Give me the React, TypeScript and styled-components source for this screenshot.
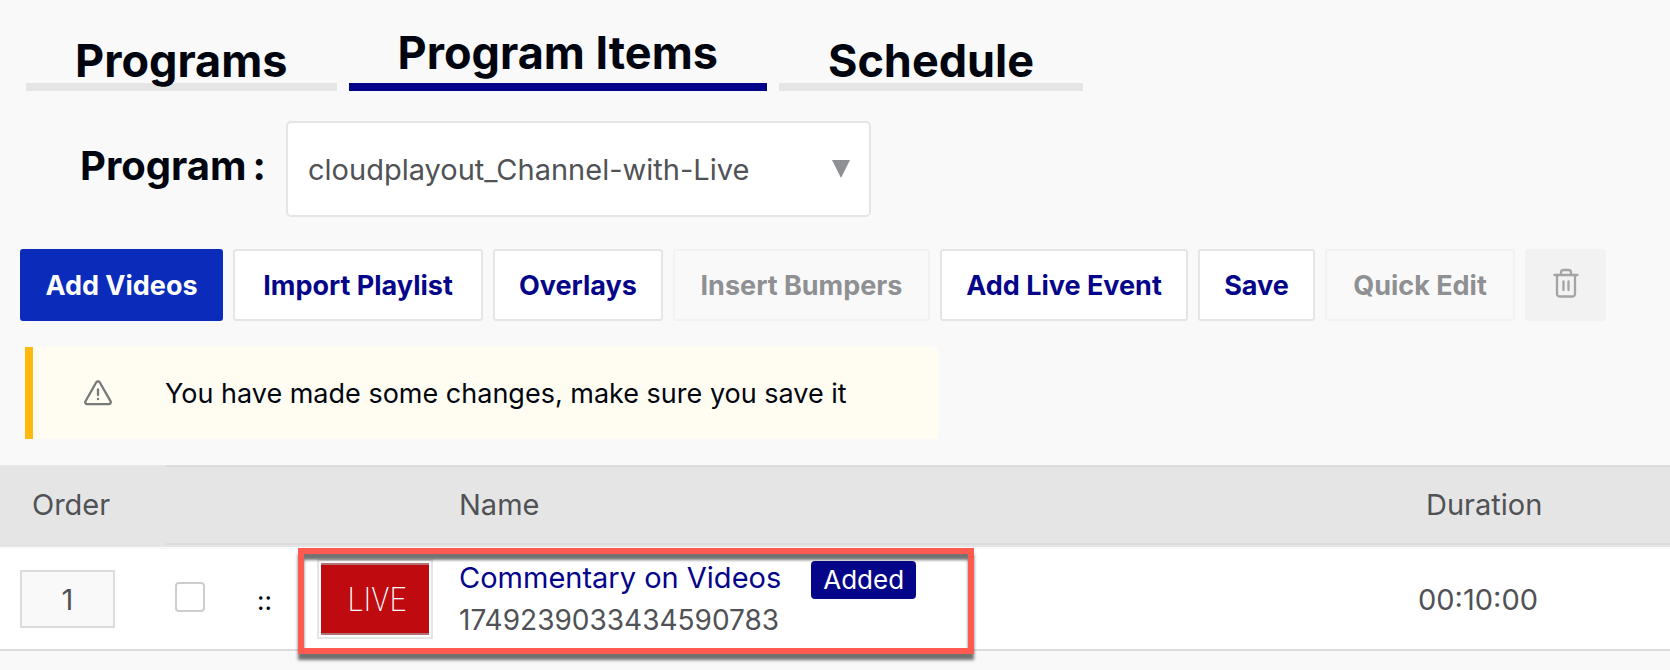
import React, { useState } from "react";
import styled, { createGlobalStyle, css } from "styled-components";

const color = {
  page: "#f9f9f9",
  ink: "#01050f",
  text: "#505256",
  muted: "#8f9093",
  navy: "#05058a",
  blue: "#0b2bbb",
  line: "#e5e5e5",
  rule: "#dcdcdc",
};

const GlobalStyle = createGlobalStyle`
  *, *::before, *::after { box-sizing: border-box; }
  body {
    margin: 0;
    background: ${color.page};
    color: ${color.ink};
    font-family: Inter, "Liberation Sans", sans-serif;
    font-size: 29px;
  }
  button, input, select { font: inherit; }
`;

const Page = styled.main`
  display: flex;
  flex-direction: column;
  min-height: 100vh;
  padding-top: 23px;
`;

const Tabs = styled.nav`
  display: flex;
  gap: 12px;
  padding-left: 26px;
`;

const Tab = styled.button<{ $active: boolean }>`
  border: 0;
  background: none;
  color: ${color.ink};
  padding: ${(p) => (p.$active ? "0 49px 8px" : "8px 49px 0")};
  box-shadow: inset 0 -8px ${(p) => (p.$active ? color.navy : color.line)};
  font-size: 45px;
  font-weight: 700;
  line-height: 60px;
  white-space: nowrap;
  cursor: pointer;
`;

const ProgramRow = styled.div`
  display: flex;
  align-items: center;
  gap: 20px;
  padding: 30px 0 32px 80px;
`;

const ProgramLabel = styled.label`
  display: flex;
  gap: 6px;
  width: 186px;
  padding-bottom: 8px;
  font-size: 40px;
  font-weight: 700;
`;

const SelectBox = styled.div`
  position: relative;
  flex: 0 1 585px;
`;

const Select = styled.select`
  appearance: none;
  display: block;
  width: 100%;
  height: 96px;
  padding: 0 60px 0 20px;
  border: 2px solid ${color.line};
  border-radius: 5px;
  background: #fff;
  color: ${color.text};
`;

const SelectArrow = styled.svg`
  position: absolute;
  top: 39px;
  right: 21px;
  width: 18px;
  height: 18px;
  fill: ${color.muted};
  pointer-events: none;
`;

const Toolbar = styled.div`
  display: flex;
  gap: 10px;
  padding-left: 20px;
`;

type Variant = "primary" | "outline" | "icon";

const ToolButton = styled.button<{ $variant?: Variant; $width: number }>`
  display: flex;
  align-items: center;
  justify-content: center;
  width: ${(p) => p.$width}px;
  height: 72px;
  padding: 0;
  border: 2px solid ${color.line};
  border-radius: 3px;
  background: #fff;
  color: ${color.navy};
  font-size: 27px;
  font-weight: 700;
  white-space: nowrap;
  cursor: pointer;

  &:disabled {
    border-color: #f2f2f2;
    background: ${color.page};
    color: ${color.muted};
    cursor: default;
  }

  ${(p) =>
    p.$variant === "primary" &&
    css`
      border-color: ${color.blue};
      background: ${color.blue};
      color: #fff;
    `}

  ${(p) =>
    p.$variant === "icon" &&
    css`
      padding-bottom: 4px;
      &:disabled {
        background: #f2f2f2;
        color: #a3a4a6;
      }
    `}
`;

const Icon = styled.svg`
  display: block;
  fill: none;
  stroke: currentColor;
  stroke-linecap: round;
  stroke-linejoin: round;
`;

const Notice = styled.div`
  display: flex;
  align-items: center;
  gap: 53px;
  width: 913px;
  max-width: calc(100% - 50px);
  height: 92px;
  margin: 26px 0 26px 25px;
  padding-left: 51px;
  border-left: 8px solid #ffb90c;
  background: #fffdf2;
  font-size: 27px;

  ${Icon} {
    color: #77797a;
  }
`;

const Table = styled.table`
  width: 100%;
  table-layout: fixed;
  border-collapse: separate;
  border-spacing: 0;
  color: ${color.text};
`;

const Col = styled.col<{ $width?: number }>`
  width: ${(p) => (p.$width ? `${p.$width}px` : "auto")};
`;

const HeadCell = styled.th<{ $indent?: number; $plain?: boolean }>`
  height: 82px;
  padding: 0 0 4px ${(p) => p.$indent ?? 0}px;
  background: ${color.line};
  box-shadow: ${(p) =>
    p.$plain
      ? "none"
      : `inset 0 2px ${color.rule}, inset 0 -2px ${color.line}, inset 0 -4px ${color.rule}`};
  font-weight: 400;
  text-align: left;
`;

const Cell = styled.td<{ $indent?: number }>`
  position: relative;
  height: 104px;
  padding: 0 0 0 ${(p) => p.$indent ?? 0}px;
  border-top: 2px solid ${color.page};
  border-bottom: 2px solid ${color.rule};
  background: #fff;
`;

const OrderInput = styled.input`
  display: block;
  width: 95px;
  height: 58px;
  padding: 0;
  border: 2px solid ${color.rule};
  background: ${color.page};
  color: ${color.text};
  text-align: center;
`;

const Checkbox = styled.input`
  appearance: none;
  display: block;
  width: 30px;
  height: 30px;
  margin: 0 0 4px;
  border: 2px solid #cccdce;
  border-radius: 4px;
  background: #fff;

  &:checked {
    background: ${color.navy};
  }
`;

const DragHandle = styled.span`
  color: ${color.ink};
  font-size: 26px;
  cursor: grab;
`;

const Thumb = styled.div`
  width: 116px;
  padding: 2px;
  border: 2px solid ${color.line};
  background: #fff;
`;

const LiveCard = styled.div`
  display: flex;
  align-items: center;
  justify-content: center;
  height: 72px;
  padding-left: 4px;
  border: solid #b07276;
  border-width: 2px 0;
  background: #bf0b0f;
  color: #fff;
  font-family: "Roboto Condensed", Roboto, sans-serif;
  font-size: 34px;
  font-weight: 200;
`;

const Highlight = styled.div`
  position: absolute;
  z-index: 1;
  top: -1px;
  left: 0;
  width: 676px;
  height: 106px;
  border: 6px solid #ff5a4f;
  box-shadow: 0 6px 3px rgba(0, 0, 0, 0.55), inset 0 6px 3px rgba(0, 0, 0, 0.55);
  pointer-events: none;
`;

const TitleLine = styled.div`
  display: flex;
  align-items: flex-end;
  gap: 30px;
  line-height: 42px;
  white-space: nowrap;
`;

const TitleLink = styled.a`
  color: ${color.navy};
  text-decoration: none;
`;

const Badge = styled.span`
  padding: 0 12px;
  border-radius: 4px;
  background: ${color.navy};
  color: #fff;
  font-size: 26px;
  line-height: 38px;
`;

const ItemId = styled.div`
  font-size: 28px;
  line-height: 42px;
`;

const TABS = ["Programs", "Program Items", "Schedule"];

const ACTIONS: { label: string; width: number; variant?: Variant; disabled?: boolean }[] = [
  { label: "Add Videos", width: 203, variant: "primary" },
  { label: "Import Playlist", width: 250 },
  { label: "Overlays", width: 170 },
  { label: "Insert Bumpers", width: 257, disabled: true },
  { label: "Add Live Event", width: 248 },
  { label: "Save", width: 117 },
  { label: "Quick Edit", width: 190, disabled: true },
];

export default function App() {
  const [tab, setTab] = useState("Program Items");

  return (
    <>
      <GlobalStyle />
      <Page>
        <Tabs>
          {TABS.map((name) => (
            <Tab key={name} $active={name === tab} onClick={() => setTab(name)}>
              {name}
            </Tab>
          ))}
        </Tabs>

        <ProgramRow>
          <ProgramLabel htmlFor="program">
            <span>Program</span>
            <span>:</span>
          </ProgramLabel>
          <SelectBox>
            <Select id="program">
              <option>cloudplayout_Channel-with-Live</option>
            </Select>
            <SelectArrow viewBox="0 0 18 18" aria-hidden="true">
              <path d="M0 0h18L9 18z" />
            </SelectArrow>
          </SelectBox>
        </ProgramRow>

        <Toolbar>
          {ACTIONS.map((a) => (
            <ToolButton key={a.label} $width={a.width} $variant={a.variant} disabled={a.disabled}>
              {a.label}
            </ToolButton>
          ))}
          <ToolButton $width={81} $variant="icon" disabled aria-label="Delete">
            <Icon width="26" height="30" viewBox="0 0 26 30" strokeWidth="2.3">
              <path d="M1.5 7h23" />
              <path d="M8 7V4.500a2.500 2.500 0 0 1 2.500-2.500h5a2.500 2.500 0 0 1 2.500 2.500V7" />
              <path d="M4 7v19a2.500 2.500 0 0 0 2.500 2.500h13a2.500 2.500 0 0 0 2.500-2.500V7" />
              <path d="M10.500 13.500v8.500M15.500 13.500v8.500" />
            </Icon>
          </ToolButton>
        </Toolbar>

        <Notice role="status">
          <Icon width="28" height="26" viewBox="0 0 28 26" strokeWidth="2.3">
            <path d="M12.300 2.300 1.500 21.200a2 2 0 0 0 1.700 3h21.600a2 2 0 0 0 1.700-3L15.700 2.300a2 2 0 0 0-3.400 0z" />
            <path d="M14 9.500v5.500M14 19v.2" />
          </Icon>
          <span>You have made some changes, make sure you save it</span>
        </Notice>

        <Table>
          <colgroup>
            <Col $width={166} />
            <Col $width={80} />
            <Col $width={52} />
            <Col $width={161} />
            <Col />
            <Col $width={252} />
          </colgroup>
          <thead>
            <tr>
              <HeadCell $plain $indent={32}>Order</HeadCell>
              <HeadCell />
              <HeadCell />
              <HeadCell />
              <HeadCell>Name</HeadCell>
              <HeadCell $indent={8}>Duration</HeadCell>
            </tr>
          </thead>
          <tbody>
            <tr>
              <Cell $indent={20}>
                <OrderInput defaultValue="1" aria-label="Order" />
              </Cell>
              <Cell $indent={9}>
                <Checkbox type="checkbox" aria-label="Select Commentary on Videos" />
              </Cell>
              <Cell $indent={11}>
                <DragHandle>::</DragHandle>
              </Cell>
              <Cell $indent={19}>
                <Thumb>
                  <LiveCard>LIVE</LiveCard>
                </Thumb>
                <Highlight />
              </Cell>
              <Cell>
                <TitleLine>
                  <TitleLink href="#commentary">Commentary on Videos</TitleLink>
                  <Badge>Added</Badge>
                </TitleLine>
                <ItemId>1749239033434590783</ItemId>
              </Cell>
              <Cell>00:10:00</Cell>
            </tr>
          </tbody>
        </Table>
      </Page>
    </>
  );
}
